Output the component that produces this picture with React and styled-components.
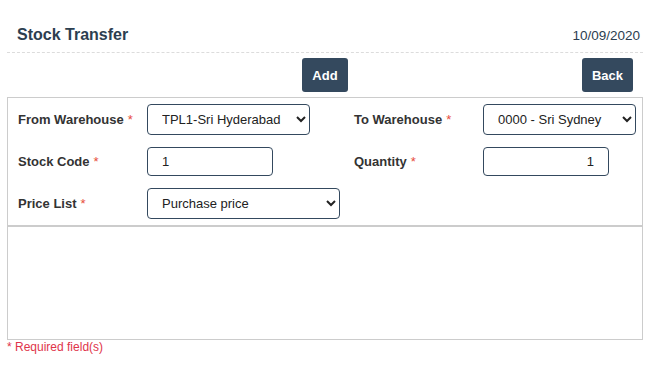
import React, { useState } from "react";
import styled, { createGlobalStyle } from "styled-components";

const GlobalStyle = createGlobalStyle`
  body {
    margin: 0;
    background: #ffffff;
    font-family: "Liberation Sans", Arial, sans-serif;
  }
`;

const Page = styled.div`
  padding: 0 10px 0 7px;
  width: 636px;
`;

const Header = styled.div`
  display: flex;
  justify-content: space-between;
  align-items: center;
  padding: 25px 3px 7px 10px;
  height: 20px;
  border-bottom: 1px dashed #dcdcdc;
`;

const Title = styled.h1`
  margin: 0;
  font-size: 16px;
  font-weight: bold;
  color: #2c3e50;
`;

const DateText = styled.span`
  font-size: 13.5px;
  color: #2c3e50;
`;

const ButtonRow = styled.div`
  display: grid;
  grid-template-columns: 1fr auto 1fr;
  align-items: center;
  padding: 5px 0 5px;
`;

const Button = styled.button`
  height: 34px;
  padding: 0 10px;
  border: none;
  border-radius: 3px;
  background: #34495e;
  color: #ffffff;
  font-family: "Liberation Sans", Arial, sans-serif;
  font-size: 13px;
  font-weight: bold;
  cursor: pointer;
  justify-self: ${(p) => p.$align || "center"};
  margin-right: ${(p) => (p.$align === "end" ? "10px" : "0")};
`;

const Panel = styled.div`
  border: 1px solid #cccccc;
  padding: 6px 10px 6px 10px;
  display: grid;
  grid-template-columns: 129px 207px 129px 1fr;
  grid-auto-rows: 31px;
  row-gap: 11px;
  align-items: center;
`;

const Label = styled.label`
  font-size: 13px;
  font-weight: bold;
  color: #333333;
`;

const Star = styled.span`
  color: #e74c3c;
  font-weight: normal;
  margin-left: 4px;
`;

const Select = styled.select`
  width: ${(p) => p.$w}px;
  height: 31px;
  padding: 0 8px 0 10px;
  border: 1px solid #34495e;
  border-radius: 4px;
  background: #ffffff;
  color: #222222;
  font-family: "Liberation Sans", Arial, sans-serif;
  font-size: 13px;
`;

const Input = styled.input`
  box-sizing: border-box;
  width: 126px;
  height: 29px;
  padding: 0 14px;
  border: 1px solid #34495e;
  border-radius: 4px;
  color: #222222;
  font-family: "Liberation Sans", Arial, sans-serif;
  font-size: 13px;
  text-align: ${(p) => p.$align || "left"};
`;

const Empty = styled.div``;

const ListArea = styled.div`
  height: 112px;
  border: 1px solid #cccccc;
`;

const Note = styled.div`
  font-size: 12px;
  color: #e0344a;
`;

const App = () => {
  const [code, setCode] = useState("1");
  const [qty, setQty] = useState("1");

  return (
    <Page>
      <GlobalStyle />
      <Header>
        <Title>Stock Transfer</Title>
        <DateText>10/09/2020</DateText>
      </Header>
      <ButtonRow>
        <span />
        <Button>Add</Button>
        <Button $align="end">Back</Button>
      </ButtonRow>
      <Panel>
        <Label>
          From Warehouse<Star>*</Star>
        </Label>
        <Select $w={163} defaultValue="tpl1">
          <option value="tpl1">TPL1-Sri Hyderabad</option>
        </Select>
        <Label>
          To Warehouse<Star>*</Star>
        </Label>
        <Select $w={153} defaultValue="0000">
          <option value="0000">0000 - Sri Sydney</option>
        </Select>

        <Label>
          Stock Code<Star>*</Star>
        </Label>
        <Input value={code} onChange={(e) => setCode(e.target.value)} />
        <Label>
          Quantity<Star>*</Star>
        </Label>
        <Input
          $align="right"
          value={qty}
          onChange={(e) => setQty(e.target.value)}
        />

        <Label>
          Price List<Star>*</Star>
        </Label>
        <Select $w={193} defaultValue="purchase">
          <option value="purchase">Purchase price</option>
        </Select>
        <Empty />
        <Empty />
      </Panel>
      <ListArea />
      <Note>* Required field(s)</Note>
    </Page>
  );
};

export default App;
